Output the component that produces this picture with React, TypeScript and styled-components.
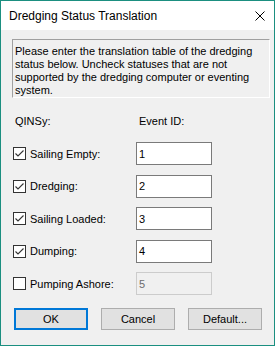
import React from "react";
import styled, { createGlobalStyle } from "styled-components";

const GlobalStyle = createGlobalStyle`
  html, body {
    margin: 0;
    padding: 0;
    background: #ffffff;
  }
  * {
    box-sizing: border-box;
  }
`;

const Window = styled.div`
  width: 275px;
  height: 346px;
  border: 1px solid #1b8f80;
  background: #f0f0f0;
  display: flex;
  flex-direction: column;
  font-family: "Liberation Sans", Arial, sans-serif;
  font-size: 11px;
  color: #000;
`;

const TitleBar = styled.div`
  height: 29px;
  background: #ffffff;
  display: flex;
  align-items: center;
  padding: 0 9px 0 8px;
  flex-shrink: 0;
`;

const Title = styled.div`
  flex: 1;
  font-size: 12px;
  color: #000;
  white-space: nowrap;
`;

const CloseIcon = styled.svg`
  width: 10px;
  height: 10px;
  display: block;
`;

const Body = styled.div`
  flex: 1;
  display: flex;
  flex-direction: column;
  padding: 9px 0 0 11px;
`;

const Description = styled.div`
  width: 258px;
  height: 59px;
  border-top: 1px solid #a0a0a0;
  border-left: 1px solid #a0a0a0;
  border-right: 1px solid #ffffff;
  border-bottom: 1px solid #ffffff;
  padding: 5px 0 0 2px;
  line-height: 13px;
  white-space: nowrap;
  overflow: hidden;
`;

const ColumnHeads = styled.div`
  display: grid;
  grid-template-columns: 124px 76px;
  margin-top: 17px;
  padding-left: 3px;
  line-height: 13px;

  & > div:first-child {
    padding-left: 0;
  }
`;

const StatusList = styled.div`
  display: flex;
  flex-direction: column;
  gap: 9.5px;
  margin-top: 14px;
`;

const StatusRow = styled.div`
  display: grid;
  grid-template-columns: 124px 76px;
  align-items: center;
  height: 23px;
`;

const CheckLabel = styled.label`
  display: flex;
  align-items: center;
  gap: 4px;
  padding-left: 1px;
  white-space: nowrap;
`;

const Box = styled.span`
  width: 13px;
  height: 13px;
  border: 1px solid #333333;
  background: #ffffff;
  display: flex;
  align-items: center;
  justify-content: center;
`;

const IdField = styled.div<{ $disabled?: boolean }>`
  height: 23px;
  border: 1px solid ${(p) => (p.$disabled ? "#cccccc" : "#7a7a7a")};
  background: ${(p) => (p.$disabled ? "#f0f0f0" : "#ffffff")};
  color: ${(p) => (p.$disabled ? "#6d6d6d" : "#000")};
  padding-left: 2px;
  display: flex;
  align-items: center;
  font-size: 11px;
`;

const ButtonBar = styled.div`
  display: flex;
  gap: 13px;
  margin-top: 13px;
  padding-left: 2px;
`;

const Button = styled.button<{ $default?: boolean }>`
  width: 74px;
  height: 22px;
  background: #e1e1e1;
  border: ${(p) => (p.$default ? "2px solid #0078d7" : "1px solid #adadad")};
  font-family: "Liberation Sans", Arial, sans-serif;
  font-size: 11px;
  color: #000;
  padding: 0;
  display: flex;
  align-items: center;
  justify-content: center;
`;

const statuses = [
  { name: "Sailing Empty:", id: "1", checked: true },
  { name: "Dredging:", id: "2", checked: true },
  { name: "Sailing Loaded:", id: "3", checked: true },
  { name: "Dumping:", id: "4", checked: true },
  { name: "Pumping Ashore:", id: "5", checked: false },
];

const Checkbox = ({ checked }: { checked: boolean }) => (
  <Box>
    {checked && (
      <svg width="11" height="11" viewBox="0 0 11 11">
        <polyline
          points="1.5,5.5 4,8 9.5,2.5"
          fill="none"
          stroke="#333"
          strokeWidth="1.1"
        />
      </svg>
    )}
  </Box>
);

export default function App() {
  return (
    <>
      <GlobalStyle />
      <Window>
        <TitleBar>
          <Title>Dredging Status Translation</Title>
          <CloseIcon viewBox="0 0 10 10">
            <path d="M0.5 0.5 L9.5 9.5 M9.5 0.5 L0.5 9.5" stroke="#000" strokeWidth="1" />
          </CloseIcon>
        </TitleBar>
        <Body>
          <Description>
            Please enter the translation table of the dredging
            <br />
            status below. Uncheck statuses that are not
            <br />
            supported by the dredging computer or eventing
            <br />
            system.
          </Description>
          <ColumnHeads>
            <div>QINSy:</div>
            <div>Event ID:</div>
          </ColumnHeads>
          <StatusList>
            {statuses.map((s) => (
              <StatusRow key={s.name}>
                <CheckLabel>
                  <Checkbox checked={s.checked} />
                  {s.name}
                </CheckLabel>
                <IdField $disabled={!s.checked}>{s.id}</IdField>
              </StatusRow>
            ))}
          </StatusList>
          <ButtonBar>
            <Button $default>OK</Button>
            <Button>Cancel</Button>
            <Button>Default...</Button>
          </ButtonBar>
        </Body>
      </Window>
    </>
  );
}
